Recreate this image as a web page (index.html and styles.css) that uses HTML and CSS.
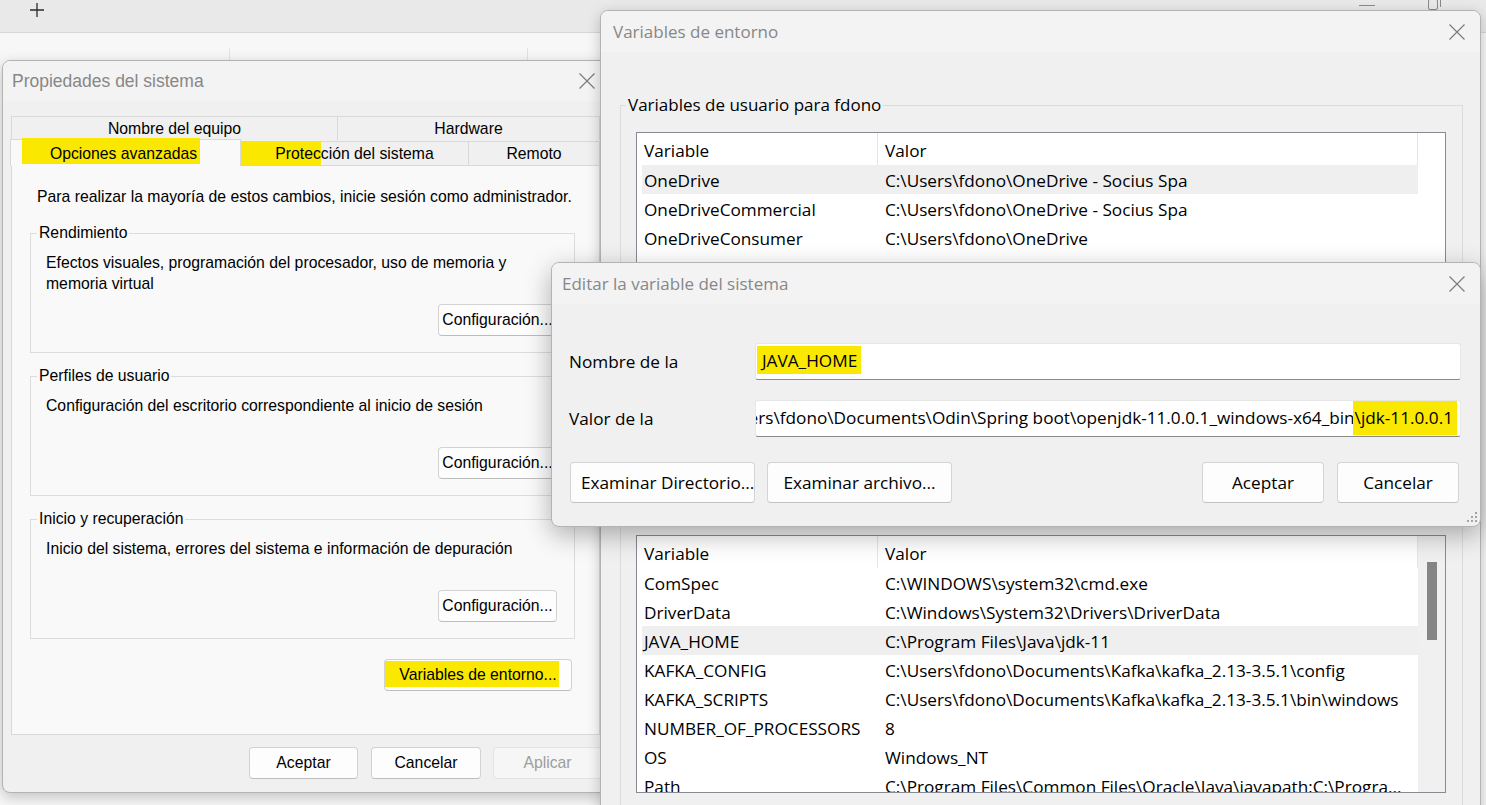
FILE: index.html
```html
<!DOCTYPE html>
<html lang="es">
<head>
<meta charset="utf-8">
<title>Variables de entorno</title>
<link rel="stylesheet" href="styles.css">
</head>
<body>
<div class="desktop">
  <header class="app-strip">
    <svg class="plus" viewBox="0 0 16 16" width="16" height="16"><path d="M8 1V15M1 8H15" stroke="#2b2b2b" stroke-width="1.3" fill="none"/></svg>
    <div class="app-ctrls">
      <svg class="min-ico" viewBox="0 0 16 4" width="16" height="4"><path d="M0 1.5H16" stroke="#8a8a8a" stroke-width="1"/></svg>
      <svg class="restore-ico" viewBox="0 0 13 14" width="13" height="14"><rect x="0.5" y="2.5" width="9" height="10" rx="1.5" stroke="#8a8a8a" fill="none"/><path d="M3 0.5H10.5A2 2 0 0 1 12.5 2.5V10" stroke="#8a8a8a" fill="none"/></svg>
    </div>
  </header>
  <div class="app-cols"><span class="col c1"></span><span class="col c2"></span><span class="col c3"></span></div>

  <!-- Propiedades del sistema -->
  <section class="win sysprops">
    <div class="titlebar">
      <span class="title">Propiedades del sistema</span>
      <svg class="close" viewBox="0 0 16 16"><path d="M0.5 0.5L15.5 15.5M15.5 0.5L0.5 15.5" stroke="#7c7c7c" stroke-width="1.2" fill="none"/></svg>
    </div>
    <div class="sp-body">
      <div class="tabs">
        <div class="tab-row row1">
          <div class="tab t-nombre">Nombre del equipo</div>
          <div class="tab t-hw">Hardware</div>
        </div>
        <div class="tab-row row2">
          <div class="tab t-adv"><span class="hl hl-adv">Opciones avanzadas</span></div>
          <div class="tab t-prot"><span class="hl hl-prot">Protec</span>ción del sistema</div>
          <div class="tab t-rem">Remoto</div>
        </div>
      </div>
      <div class="panel">
        <p class="intro">Para realizar la mayoría de estos cambios, inicie sesión como administrador.</p>
        <fieldset class="group">
          <legend>Rendimiento</legend>
          <p>Efectos visuales, programación del procesador, uso de memoria y memoria virtual</p>
          <div class="group-actions"><button class="btn cfg">Configuración...</button></div>
        </fieldset>
        <fieldset class="group">
          <legend>Perfiles de usuario</legend>
          <p>Configuración del escritorio correspondiente al inicio de sesión</p>
          <div class="group-actions"><button class="btn cfg">Configuración...</button></div>
        </fieldset>
        <fieldset class="group">
          <legend>Inicio y recuperación</legend>
          <p>Inicio del sistema, errores del sistema e información de depuración</p>
          <div class="group-actions"><button class="btn cfg">Configuración...</button></div>
        </fieldset>
        <button class="btn env-btn"><span class="hl hl-env">Variables de entorno...</span></button>
      </div>
      <div class="dlg-buttons">
        <button class="btn b-ok">Aceptar</button>
        <button class="btn b-cancel">Cancelar</button>
        <button class="btn b-apply" disabled>Aplicar</button>
      </div>
    </div>
  </section>

  <!-- Variables de entorno -->
  <section class="win envvars">
    <div class="titlebar">
      <span class="title">Variables de entorno</span>
      <svg class="close" viewBox="0 0 16 16"><path d="M0.5 0.5L15.5 15.5M15.5 0.5L0.5 15.5" stroke="#7c7c7c" stroke-width="1.2" fill="none"/></svg>
    </div>
    <div class="env-body">
      <fieldset class="egroup eg-user">
        <legend>Variables de usuario para fdono</legend>
        <div class="list list-user">
          <div class="list-main">
            <div class="lv-row lv-head"><span>Variable</span><span>Valor</span></div>
            <div class="lv-row sel"><span>OneDrive</span><span>C:\Users\fdono\OneDrive - Socius Spa</span></div>
            <div class="lv-row"><span>OneDriveCommercial</span><span>C:\Users\fdono\OneDrive - Socius Spa</span></div>
            <div class="lv-row"><span>OneDriveConsumer</span><span>C:\Users\fdono\OneDrive</span></div>
            <div class="lv-row"><span>Path</span><span>C:\Users\fdono\AppData\Local\Programs\Python\Python311\Scripts\;C:\Users\fdono\AppData\...</span></div>
          </div>
          <div class="list-scroll"></div>
        </div>
        <div class="list-actions">
          <button class="ebtn">Nuevo...</button>
          <button class="ebtn">Editar...</button>
          <button class="ebtn">Eliminar</button>
        </div>
      </fieldset>
      <fieldset class="egroup eg-sys">
        <legend>Variables del sistema</legend>
        <div class="list list-sys">
          <div class="list-main">
            <div class="lv-row lv-head"><span>Variable</span><span>Valor</span></div>
            <div class="lv-row"><span>ComSpec</span><span>C:\WINDOWS\system32\cmd.exe</span></div>
            <div class="lv-row"><span>DriverData</span><span>C:\Windows\System32\Drivers\DriverData</span></div>
            <div class="lv-row sel"><span>JAVA_HOME</span><span>C:\Program Files\Java\jdk-11</span></div>
            <div class="lv-row"><span>KAFKA_CONFIG</span><span>C:\Users\fdono\Documents\Kafka\kafka_2.13-3.5.1\config</span></div>
            <div class="lv-row"><span>KAFKA_SCRIPTS</span><span>C:\Users\fdono\Documents\Kafka\kafka_2.13-3.5.1\bin\windows</span></div>
            <div class="lv-row"><span>NUMBER_OF_PROCESSORS</span><span>8</span></div>
            <div class="lv-row"><span>OS</span><span>Windows_NT</span></div>
            <div class="lv-row"><span>Path</span><span>C:\Program Files\Common Files\Oracle\Java\javapath;C:\Progra...</span></div>
          </div>
          <div class="list-scroll sb"><div class="thumb"></div></div>
        </div>
      </fieldset>
    </div>
  </section>

  <!-- Editar la variable del sistema -->
  <section class="win editvar">
    <div class="titlebar">
      <span class="title">Editar la variable del sistema</span>
      <svg class="close" viewBox="0 0 16 16"><path d="M0.5 0.5L15.5 15.5M15.5 0.5L0.5 15.5" stroke="#7c7c7c" stroke-width="1.2" fill="none"/></svg>
    </div>
    <div class="ev-body">
      <div class="ev-form">
        <label class="ev-label">Nombre de la</label>
        <div class="field"><span class="field-text"><span class="hl hl-java">JAVA_HOME</span></span></div>
        <label class="ev-label">Valor de la</label>
        <div class="field field-value"><span class="field-text">C:\Users\fdono\Documents\Odin\Spring boot\openjdk-11.0.0.1_windows-x64_bin<span class="hl hl-jdk">\jdk-11.0.0.1</span></span></div>
      </div>
      <div class="ev-actions">
        <button class="ebtn wide">Examinar Directorio...</button>
        <button class="ebtn wide">Examinar archivo...</button>
        <button class="ebtn std push">Aceptar</button>
        <button class="ebtn std">Cancelar</button>
      </div>
    </div>
    <svg class="grip" viewBox="0 0 14 14" width="14" height="14">
      <rect x="11" y="3" width="2" height="2" fill="#a3a3a3"/>
      <rect x="7" y="7" width="2" height="2" fill="#a3a3a3"/>
      <rect x="11" y="7" width="2" height="2" fill="#a3a3a3"/>
      <rect x="3" y="11" width="2" height="2" fill="#a3a3a3"/>
      <rect x="7" y="11" width="2" height="2" fill="#a3a3a3"/>
      <rect x="11" y="11" width="2" height="2" fill="#a3a3a3"/>
    </svg>
  </section>
</div>
</body>
</html>
```

FILE: styles.css
```css
* { box-sizing: border-box; }
html, body { margin: 0; padding: 0; }
body {
  width: 1486px;
  height: 805px;
  overflow: hidden;
  background: #f3f3f3;
  font-family: "Liberation Sans", Arial, sans-serif;
}
.desktop {
  position: relative;
  width: 1486px;
  height: 805px;
  overflow: hidden;
  background: #f7f7f7;
}

/* background app */
.app-strip {
  height: 33px;
  background: #e9e9e9;
  border-bottom: 1px solid #d7d7d7;
  display: flex;
  align-items: flex-start;
  padding-left: 29px;
}
.plus { margin-top: 2px; }
.app-ctrls {
  margin-left: auto;
  display: flex;
  align-items: flex-start;
  gap: 53px;
  padding-right: 45px;
}
.min-ico { margin-top: 4px; }
.restore-ico { margin-top: -3px; }
.app-cols {
  display: flex;
  margin-top: 15px;
  height: 14px;
}
.col { border-right: 1px solid #e2e2e2; }
.c1 { width: 230px; }
.c2 { width: 298px; }
.c3 { width: 400px; }

/* generic window */
.win {
  position: absolute;
  background: #f0f0f0;
  border: 1px solid #b3b3b3;
  border-radius: 8px;
  overflow: hidden;
  box-shadow: 0 4px 14px rgba(0, 0, 0, 0.22);
}
.titlebar {
  display: flex;
  align-items: center;
  background: #f3f3f3;
}
.title { color: #878787; white-space: nowrap; }
.close {
  margin-left: auto;
  margin-right: 15px;
  width: 16px;
  height: 16px;
  flex: none;
}
.hl { background: #fbe800; }

/* ---------- Propiedades del sistema ---------- */
.sysprops {
  left: 2px;
  top: 60px;
  width: 610px;
  height: 733px;
  z-index: 1;
  font-family: "Liberation Sans", Arial, sans-serif;
  font-size: 15.75px;
  color: #000;
}
.sysprops .titlebar { height: 40px; padding-left: 9px; }
.sysprops .title { font-size: 17.5px; }
.sysprops .close { margin-right: 16px; }
.sp-body { padding: 15px 11px 0 8px; }

.tab-row { display: flex; }
.tab {
  display: flex;
  align-items: center;
  justify-content: center;
  border: 1px solid #d9d9d9;
  border-bottom: none;
  background: #f0f0f0;
  white-space: nowrap;
}
.row1 .tab { height: 24px; }
.t-nombre { width: 327px; }
.t-hw { flex: 1; margin-left: -1px; }
.row2 { height: 25px; align-items: flex-end; }
.row2 .tab { height: 24px; }
.row2 .t-adv {
  width: 231px;
  height: 27px;
  margin-left: -1px;
  margin-bottom: -1px;
  background: #f9f9f9;
  position: relative;
  z-index: 1;
  padding: 0 4px 4px 0;
}
.t-prot { width: 229px; margin-left: -1px; }
.t-rem { flex: 1; margin-left: -1px; }
.hl-adv { padding: 7px 3px 1px 28px; margin: 0 -3px 0 -28px; }
.hl-prot { padding: 4px 0 3px 35px; margin-left: -35px; }

.panel {
  height: 570px;
  background: #f9f9f9;
  border: 1px solid #d9d9d9;
  padding: 22px 24px 0 18px;
  display: flex;
  flex-direction: column;
}
.intro { margin: 0 0 0 7px; line-height: 18px; white-space: nowrap; }
.group {
  margin: 18px 0 0;
  padding: 0 17px 16px 15px;
  border: 1px solid #dcdcdc;
  min-width: 0;
}
.group + .group { margin-top: 14px; }
.group legend { padding: 0 2px; margin-left: -9px; line-height: 18px; }
.group p { margin: 10px 0 0; line-height: 21px; height: 42px; max-width: 490px; }
.group-actions { display: flex; justify-content: flex-end; margin-top: 10px; }

.btn {
  font: inherit;
  color: #000;
  height: 32px;
  padding: 0;
  background: #fdfdfd;
  border: 1px solid #d2d2d2;
  border-bottom-color: #bdbdbd;
  border-radius: 4px;
  white-space: nowrap;
}
.cfg { width: 119px; }
.env-btn {
  align-self: flex-end;
  width: 188px;
  margin: 20px 3px 0 0;
}
.hl-env { padding: 5px 2px 4px 14px; margin: 0 -2px 0 -14px; }
.dlg-buttons {
  display: flex;
  justify-content: flex-end;
  margin: 12px -2px 0 0;
}
.b-ok { width: 109px; }
.b-cancel { width: 110px; margin-left: 13px; }
.b-apply {
  width: 109px;
  margin-left: 12px;
  color: #9d9d9d;
  background: #f6f6f6;
  border-color: #e3e3e3;
}

/* ---------- Variables de entorno ---------- */
.envvars {
  left: 600px;
  top: 10px;
  width: 881px;
  height: 830px;
  z-index: 2;
  font-family: "Open Sans", "Noto Sans", sans-serif;
  font-size: 17.2px;
  color: #000;
}
.envvars .titlebar { height: 41px; padding-left: 12px; }
.envvars .title, .editvar .title { font-size: 17px; }
.env-body { padding: 42px 17px 0 19px; }
.egroup {
  margin: 0;
  padding: 0 16px 14px 15px;
  border: 1px solid #dcdcdc;
  min-width: 0;
}
.egroup legend { padding: 0 2px; margin-left: -10px; line-height: 22px; font-size: 17px; }
.eg-sys { margin-top: 26px; }
.list {
  display: flex;
  margin-top: 16px;
  background: #fff;
  border: 1px solid #868a91;
  overflow: hidden;
}
.list-user { height: 280px; }
.list-sys { height: 258px; }
.list-main { width: 781px; flex: none; }
.list-scroll { width: 27px; flex: none; }
.list-scroll.sb { background: #f0f0f0; }
.thumb {
  width: 10px;
  height: 78px;
  margin: 26px 0 0 9px;
  background: #858585;
}
.lv-row {
  display: grid;
  grid-template-columns: 236px 540px;
  margin-left: 5px;
  height: 29px;
  align-items: center;
  white-space: nowrap;
}
.lv-row span { overflow: hidden; padding-top: 1px; }
.lv-row span:first-child { padding-left: 2px; }
.lv-row span:last-child { padding-left: 7px; }
.lv-head { height: 32px; align-items: stretch; }
.lv-head span {
  display: flex;
  align-items: center;
  padding-top: 2px;
  border-right: 1px solid #e5e5e5;
}
.lv-row.sel { background: #efefef; }
.list-actions {
  display: flex;
  justify-content: flex-end;
  gap: 12px;
  margin-top: 12px;
}
.ebtn {
  font: inherit;
  color: #000;
  height: 41px;
  padding: 0 10px;
  background: #fdfdfd;
  border: 1px solid #d4d4d4;
  border-bottom-color: #c2c2c2;
  border-radius: 4px;
  white-space: nowrap;
}
.list-actions .ebtn { height: 32px; width: 110px; }

/* ---------- Editar la variable del sistema ---------- */
.editvar {
  left: 551px;
  top: 262px;
  width: 930px;
  height: 265px;
  z-index: 3;
  font-family: "Open Sans", "Noto Sans", sans-serif;
  font-size: 17.2px;
  color: #000;
  box-shadow: 0 8px 26px rgba(0, 0, 0, 0.3);
}
.editvar .titlebar { height: 41px; padding-left: 10px; }
.ev-body { padding: 39px 19px 0 17px; }
.ev-form {
  display: grid;
  grid-template-columns: 186px 1fr;
  row-gap: 20px;
  align-items: center;
}
.ev-label { white-space: nowrap; }
.field {
  height: 37px;
  display: flex;
  align-items: center;
  padding: 0 0 3px 6px;
  background: #fff;
  border: 1px solid #e6e6e6;
  border-bottom: 1px solid #8a8a8a;
  border-radius: 3px;
  overflow: hidden;
  white-space: nowrap;
}
.field-value { justify-content: flex-end; padding-right: 7px; }
.field-text { flex: none; }
.hl-java { padding: 3px 4px 2px 5px; margin: 0 -4px 0 -5px; }
.hl-jdk { padding: 5px 4px 6px 2px; margin: 0 -4px 0 -2px; }
.ev-actions {
  display: flex;
  margin: 25px 2px 0 1px;
}
.ev-actions .wide { width: 185px; }
.ev-actions .wide + .wide { margin-left: 12px; }
.ev-actions .std { width: 122px; margin-left: 13px; }
.ev-actions .push { margin-left: auto; }
.grip {
  position: absolute;
  right: 2px;
  bottom: 3px;
}
```
